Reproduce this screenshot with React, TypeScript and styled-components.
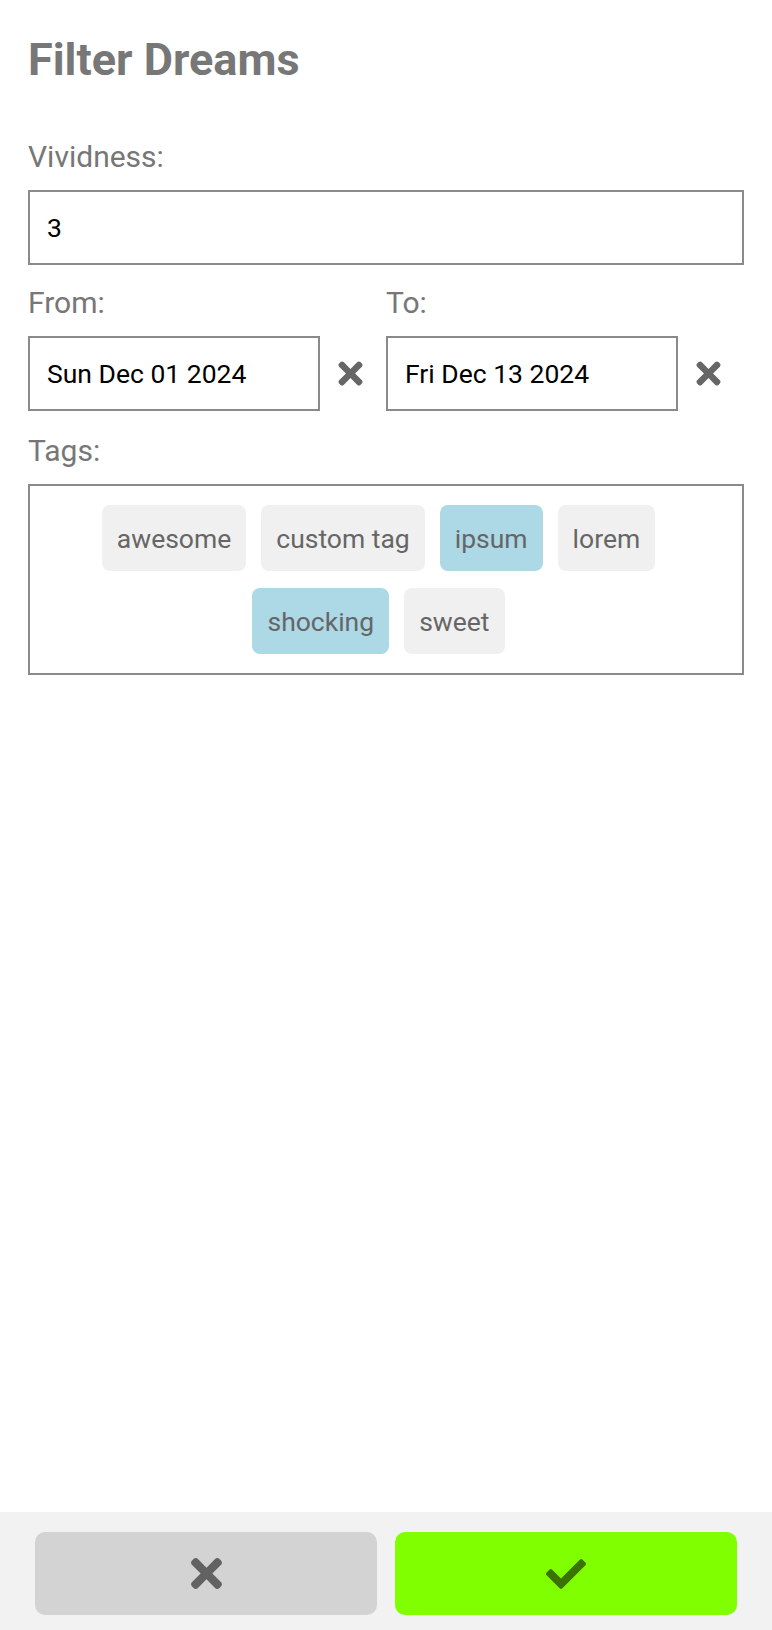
import React, { useState } from "react";
import styled, { createGlobalStyle } from "styled-components";
import { FaTimes, FaCheck } from "react-icons/fa";

const GlobalStyle = createGlobalStyle`
  html, body {
    margin: 0;
    padding: 0;
    background: #ffffff;
    font-family: Roboto, "Noto Sans", Arial, sans-serif;
  }
  * { box-sizing: border-box; }
`;

const Page = styled.div`
  min-height: 100vh;
  display: flex;
  flex-direction: column;
`;

const Main = styled.main`
  flex: 1;
  padding: 33px 28px 0 28px;
`;

const Title = styled.h1`
  margin: 0;
  font-size: 45px;
  line-height: 54px;
  font-weight: 700;
  color: #777777;
`;

const Field = styled.div<{ $top: number }>`
  margin-top: ${(p) => p.$top}px;
  display: flex;
  flex-direction: column;
`;

const Label = styled.label`
  display: block;
  font-size: 30px;
  line-height: 35px;
  color: #777777;
  margin-bottom: 16px;
`;

const TextInput = styled.input`
  width: 100%;
  min-width: 0;
  height: 75px;
  border: 2px solid #8a8a8a;
  border-radius: 0;
  padding: 0 17px;
  font-family: Roboto, "Noto Sans", Arial, sans-serif;
  font-size: 26.5px;
  color: #000000;
  background: #ffffff;
  outline: none;
`;

const DateRow = styled.div`
  display: grid;
  grid-template-columns: 1fr 1fr;
  margin-top: 20px;
`;

const DateGroup = styled.div`
  display: flex;
  flex-direction: column;
`;

const DateLine = styled.div`
  display: flex;
  align-items: center;
  padding-right: 6px;
`;

const ClearButton = styled.button`
  width: 60px;
  height: 75px;
  flex: none;
  border: none;
  background: none;
  padding: 0;
  display: flex;
  align-items: center;
  justify-content: center;
  color: #666666;
  cursor: pointer;
`;

const TagBox = styled.div`
  border: 2px solid #8a8a8a;
  padding: 19px 20px;
  display: flex;
  flex-wrap: wrap;
  justify-content: center;
  row-gap: 17px;
`;

const Chip = styled.button<{ $selected: boolean }>`
  height: 66px;
  padding: 0 15px;
  margin-right: 15px;
  border: none;
  border-radius: 8px;
  background: ${(p) => (p.$selected ? "#add8e6" : "#f0f0f0")};
  color: #666666;
  font-family: Roboto, "Noto Sans", Arial, sans-serif;
  font-size: 26.5px;
  display: inline-flex;
  align-items: center;
  cursor: pointer;
`;

const BottomBar = styled.footer`
  flex: none;
  background: #f2f2f2;
  height: 118px;
  padding: 20px 35px 15px 35px;
  display: grid;
  grid-template-columns: 1fr 1fr;
  gap: 18px;
`;

const ActionButton = styled.button<{ $variant: "cancel" | "ok" }>`
  height: 83px;
  border: none;
  border-radius: 10px;
  background: ${(p) => (p.$variant === "ok" ? "#80ff00" : "#d3d3d3")};
  color: ${(p) => (p.$variant === "ok" ? "#3a7300" : "#626262")};
  display: flex;
  align-items: center;
  justify-content: center;
  cursor: pointer;
`;

const TAGS = ["awesome", "custom tag", "ipsum", "lorem", "shocking", "sweet"];

export default function App() {
  const [selected, setSelected] = useState<string[]>(["ipsum", "shocking"]);
  const toggle = (t: string) =>
    setSelected((s) => (s.includes(t) ? s.filter((x) => x !== t) : [...s, t]));

  return (
    <Page>
      <GlobalStyle />
      <Main>
        <Title>Filter Dreams</Title>
        <Field $top={52}>
          <Label>Vividness:</Label>
          <TextInput defaultValue="3" />
        </Field>
        <DateRow>
          <DateGroup>
            <Label>From:</Label>
            <DateLine>
              <TextInput defaultValue="Sun Dec 01 2024" />
              <ClearButton aria-label="Clear from">
                <FaTimes size={35} />
              </ClearButton>
            </DateLine>
          </DateGroup>
          <DateGroup>
            <Label>To:</Label>
            <DateLine>
              <TextInput defaultValue="Fri Dec 13 2024" />
              <ClearButton aria-label="Clear to">
                <FaTimes size={35} />
              </ClearButton>
            </DateLine>
          </DateGroup>
        </DateRow>
        <Field $top={22}>
          <Label>Tags:</Label>
          <TagBox>
            {TAGS.map((t) => (
              <Chip key={t} $selected={selected.includes(t)} onClick={() => toggle(t)}>
                {t}
              </Chip>
            ))}
          </TagBox>
        </Field>
      </Main>
      <BottomBar>
        <ActionButton $variant="cancel" aria-label="Cancel">
          <FaTimes size={45} />
        </ActionButton>
        <ActionButton $variant="ok" aria-label="Apply">
          <FaCheck size={40} />
        </ActionButton>
      </BottomBar>
    </Page>
  );
}
